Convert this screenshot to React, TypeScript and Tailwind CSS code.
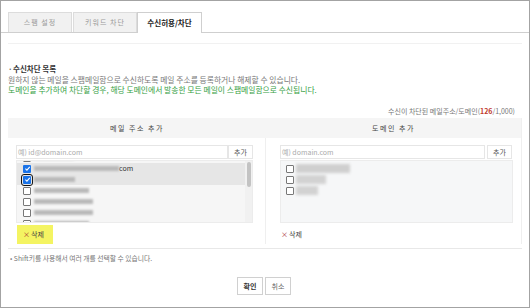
import React from 'react';

const font = "font-['Noto_Sans_CJK_KR','Noto_Sans',sans-serif]";

const Check: React.FC<{ checked?: boolean; focused?: boolean }> = ({ checked, focused }) => (
  <span
    className={
      focused
        ? 'w-[8px] h-[8px] flex items-center justify-center rounded-[1px] bg-[#1a73e8] outline outline-1 outline-[#111] outline-offset-[1px]'
        : checked
        ? 'w-[8px] h-[8px] flex items-center justify-center rounded-[1px] bg-[#1a73e8]'
        : 'w-[8px] h-[8px] flex items-center justify-center rounded-[1px] bg-white border border-[#777]'
    }
  >
    {checked && (
      <svg viewBox="0 0 10 10" className="w-[7px] h-[7px]">
        <path d="M2 5.2 L4.2 7.3 L8.2 2.8" fill="none" stroke="#fff" strokeWidth="1.6" />
      </svg>
    )}
  </span>
);

const Blur: React.FC<{ w: string }> = ({ w }) => (
  <span className={`${w} h-[5px] ml-[3px] bg-[#b9b9b9] blur-[1.2px]`} />
);

const LeftRow: React.FC<{ bar: string; checked?: boolean; focused?: boolean; sel?: boolean; tail?: string }> = ({
  bar,
  checked,
  focused,
  sel,
  tail,
}) => (
  <div className={sel ? 'h-[11px] flex items-center pl-[6px] bg-[#e6e6e6]' : 'h-[11px] flex items-center pl-[6px]'}>
    <Check checked={checked} focused={focused} />
    <Blur w={bar} />
    {tail && <span className="text-[7px] text-[#333] leading-none">{tail}</span>}
  </div>
);

export default function App() {
  return (
    <div className={`w-[530px] h-[308px] border border-[#a3a3a3] bg-white overflow-hidden ${font} text-[7px] text-[#555]`}>
      {/* tabs */}
      <div className="h-[32px] flex items-end pl-[7px] border-b border-[#cfcfcf]">
        <div className="w-[64px] h-[20px] flex items-center justify-center bg-[#f1f1f1] border border-[#dcdcdc] border-b-0 text-[#9a9a9a] tracking-[1px]">
          스팸 설정
        </div>
        <div className="w-[64px] h-[20px] ml-px flex items-center justify-center bg-[#f1f1f1] border border-[#dcdcdc] border-b-0 text-[#9a9a9a] tracking-[1px]">
          키워드 차단
        </div>
        <div className="w-[65px] h-[21px] -mb-px flex items-center justify-center bg-white border border-[#cfcfcf] border-b-0 text-[#222] font-bold text-[7.5px]">
          수신허용/차단
        </div>
      </div>
      <div className="mx-[7px] mt-[10px] border-t border-[#f1f1f1]" />

      <div className="px-[7px]">
        <div className="mt-[20px] h-[10px] leading-[10px] flex items-center text-[#333] font-bold text-[7.5px]">
          <span className="w-[5px] text-[#666]">·</span>수신차단 목록
        </div>
        <div className="h-[11px] leading-[11px] text-[#777] text-[7.8px]">
          원하지 않는 메일을 스팸메일함으로 수신하도록 메일 주소를 등록하거나 해제할 수 있습니다.
        </div>
        <div className="h-[10px] leading-[10px] text-[#35a043] text-[7.8px]">
          도메인을 추가하여 차단할 경우, 해당 도메인에서 발송한 모든 메일이 스팸메일함으로 수신됩니다.
        </div>
        <div className="mt-[11px] h-[10px] leading-[10px] text-right pr-[7px] text-[#777]">
          수신이 차단된 메일주소/도메인(<span className="text-[#c0392b] font-bold">126</span>/1,000)
        </div>

        {/* table */}
        <div className="mt-[2px] border-r border-[#efefef]">
          <div className="h-[20px] flex bg-[#f5f5f5] text-[#444] tracking-[1.5px]">
            <div className="w-[258px] flex items-center justify-center">메일 주소 추가</div>
            <div className="flex-1 flex items-center justify-center">도메인 추가</div>
          </div>
          <div className="flex">
            {/* left column */}
            <div className="w-[258px] pl-[8px] pt-[7px] border-r border-[#efefef]">
              <div className="flex h-[14px]">
                <div className="w-[212px] border border-[#e6e6e6] flex items-center pl-[1px] text-[#aaa]">예) id@domain.com</div>
                <div className="w-[25px] border border-[#e6e6e6] flex items-center justify-center text-[#555]">추가</div>
              </div>
              <div className="mt-px w-[237px] h-[63px] bg-[#f6f6f6] border border-[#ececec] flex overflow-hidden">
                <div className="flex-1 -mt-[9px]">
                  <LeftRow bar="w-[40px]" />
                  <LeftRow bar="w-[85px]" checked sel tail="com" />
                  <LeftRow bar="w-[41px]" checked focused sel />
                  <LeftRow bar="w-[55px]" />
                  <LeftRow bar="w-[59px]" />
                  <LeftRow bar="w-[59px]" />
                  <LeftRow bar="w-[55px]" />
                </div>
                <div className="w-[7px] bg-[#f1f1f1] flex justify-center pt-px">
                  <div className="w-[4px] h-[25px] bg-[#c3c3c3] rounded-[2px]" />
                </div>
              </div>
              <div className="mt-[2px] ml-[1px] w-[36px] h-[19px] bg-[#f4f462] flex items-center pl-[6px] text-[#444]">
                <span className="text-[#a52a2a] mr-[1px]">×</span>삭제
              </div>
            </div>
            {/* right column */}
            <div className="flex-1 pl-[14px] pt-[7px]">
              <div className="flex h-[14px]">
                <div className="w-[205px] border border-[#e6e6e6] flex items-center pl-[1px] text-[#aaa]">예) domain.com</div>
                <div className="w-[25px] ml-[2px] border border-[#e6e6e6] flex items-center justify-center text-[#555]">추가</div>
              </div>
              <div className="mt-px w-[233px] h-[63px] bg-[#f6f7f8] border border-[#ececec] pt-[2px]">
                <div className="h-[11px] flex items-center pl-[5px]">
                  <Check />
                  <span className="w-[54px] h-[9px] ml-[2px] bg-[#cfcfcf] blur-[1.5px]" />
                </div>
                <div className="h-[11px] flex items-center pl-[5px]">
                  <Check />
                  <span className="w-[30px] h-[9px] ml-[2px] bg-[#d2d2d2] blur-[1.5px]" />
                </div>
                <div className="h-[11px] flex items-center pl-[5px]">
                  <Check />
                  <span className="w-[22px] h-[9px] ml-[2px] bg-[#d2d2d2] blur-[1.5px]" />
                </div>
              </div>
              <div className="mt-[2px] h-[19px] flex items-center pl-[1px] text-[#444]">
                <span className="text-[#a52a2a] mr-[1px]">×</span>삭제
              </div>
            </div>
          </div>
        </div>
        <div className="mt-[4px] border-t border-[#e8e8e8]" />
        <div className="mt-[4px] h-[10px] leading-[10px] pl-[2px] text-[6.8px] text-[#777]">
          • Shift키를 사용해서 여러 개를 선택할 수 있습니다.
        </div>
        <div className="mt-[14px] flex justify-center gap-[2px] pr-[2px]">
          <div className="w-[26px] h-[18px] border border-[#d0d0d0] flex items-center justify-center font-bold text-[#333]">확인</div>
          <div className="w-[26px] h-[18px] border border-[#d0d0d0] flex items-center justify-center text-[#666]">취소</div>
        </div>
      </div>
    </div>
  );
}
